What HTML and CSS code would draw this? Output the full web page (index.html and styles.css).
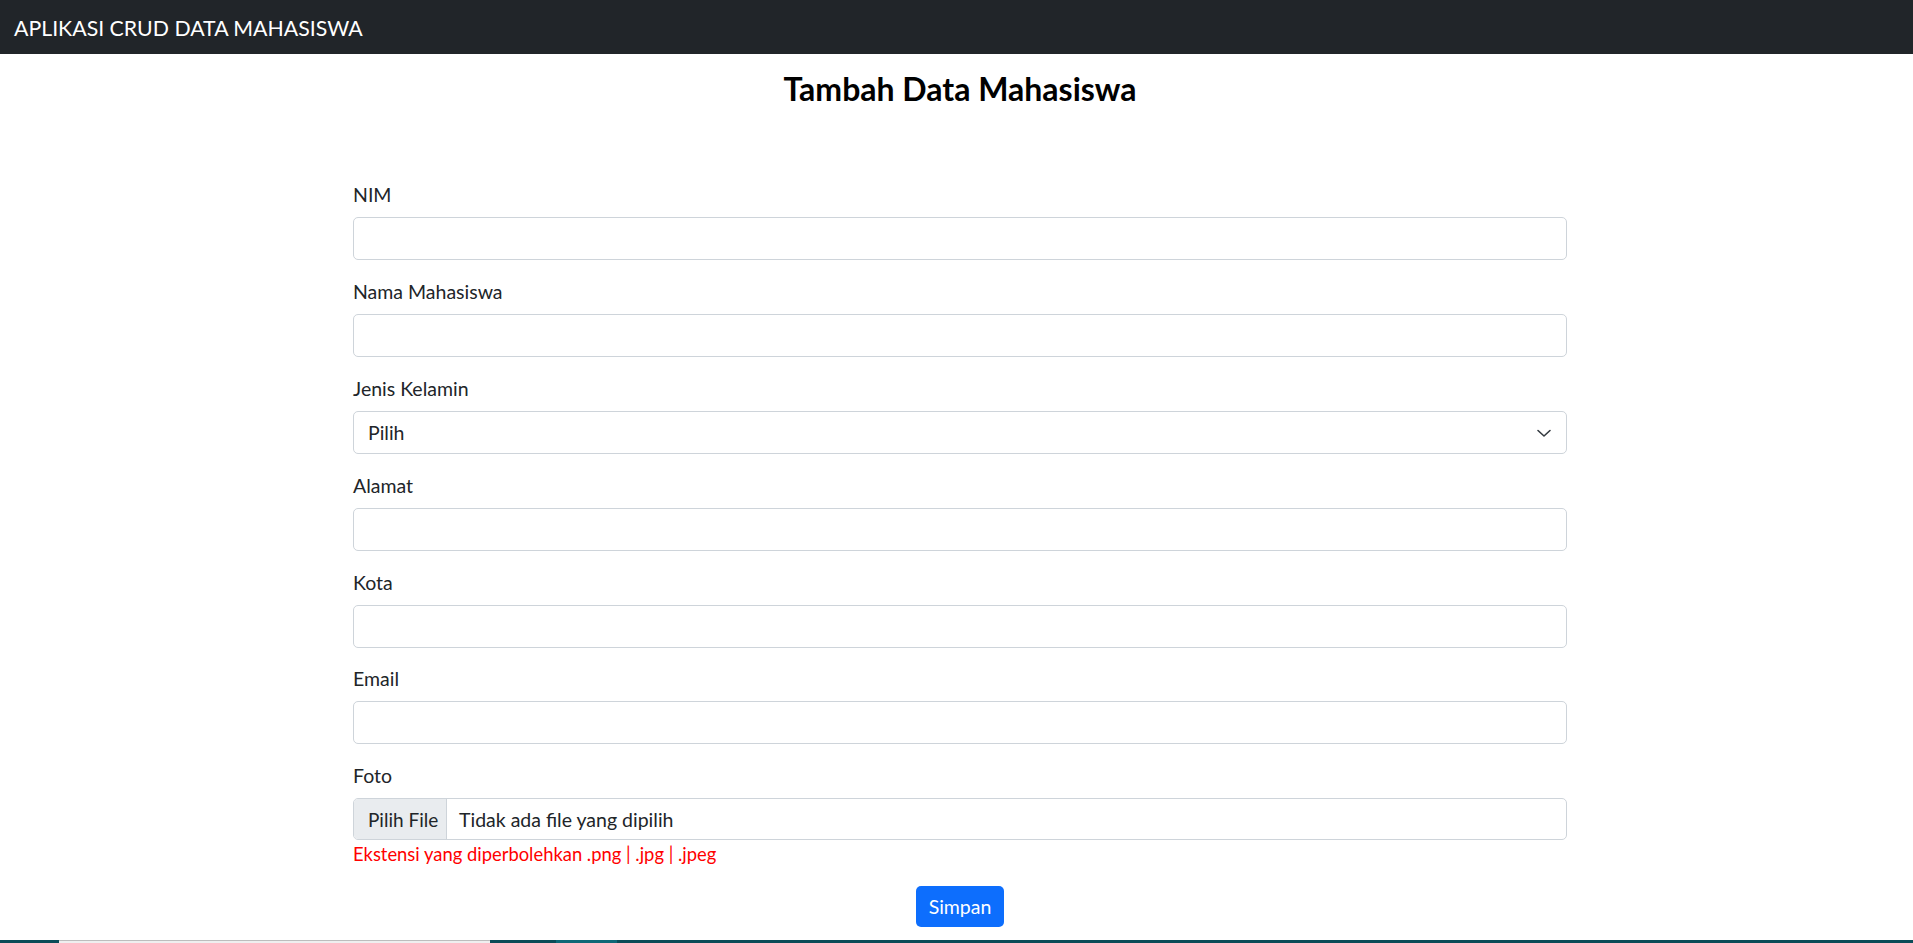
FILE: index.html
```html
<!DOCTYPE html>
<html lang="id">
<head>
<meta charset="utf-8">
<title>Tambah Data Mahasiswa</title>
<link rel="stylesheet" href="styles.css">
</head>
<body>
<nav class="navbar">
  <span class="brand">APLIKASI CRUD DATA MAHASISWA</span>
</nav>
<main class="page">
  <h1 class="title">Tambah Data Mahasiswa</h1>
  <form class="form">
    <div class="group">
      <label class="label">NIM</label>
      <div class="control"></div>
    </div>
    <div class="group">
      <label class="label">Nama Mahasiswa</label>
      <div class="control"></div>
    </div>
    <div class="group">
      <label class="label">Jenis Kelamin</label>
      <div class="control select">
        <span>Pilih</span>
        <svg class="chev" width="16" height="12" viewBox="0 0 16 12"><path d="M2 3.5l6 5.5 6-5.5" fill="none" stroke="#343a40" stroke-width="1.6" stroke-linecap="round" stroke-linejoin="round"/></svg>
      </div>
    </div>
    <div class="group">
      <label class="label">Alamat</label>
      <div class="control"></div>
    </div>
    <div class="group">
      <label class="label">Kota</label>
      <div class="control"></div>
    </div>
    <div class="group">
      <label class="label">Email</label>
      <div class="control"></div>
    </div>
    <div class="group last">
      <label class="label">Foto</label>
      <div class="control file">
        <span class="file-btn">Pilih File</span>
        <span class="file-name">Tidak ada file yang dipilih</span>
      </div>
      <div class="hint">Ekstensi yang diperbolehkan .png | .jpg | .jpeg</div>
    </div>
    <div class="actions">
      <span class="btn">Simpan</span>
    </div>
  </form>
</main>
<div class="taskbar">
  <span class="tb tb-dark w59"></span>
  <span class="tb tb-light w431"></span>
  <span class="tb tb-dark w66"></span>
  <span class="tb tb-mid w61"></span>
  <span class="tb tb-dark grow"></span>
</div>
</body>
</html>
```
FILE: styles.css
```css
* { box-sizing: border-box; }
html, body { margin: 0; padding: 0; background: #fff; }
body {
  font-family: Lato, "Open Sans", sans-serif;
  font-size: 19.5px;
  color: #212529;
  height: 943px;
  overflow: hidden;
}
.navbar {
  height: 54px;
  background: #212529;
  display: flex;
  align-items: center;
  padding-left: 14px;
}
.brand {
  color: #fff;
  font-size: 21.3px;
  line-height: 30px;
  padding-top: 1px;
}
.page {
  padding-left: 7px;
}
.title {
  margin: 16px 0 0;
  text-align: center;
  font-size: 32px;
  line-height: 38.4px;
  font-weight: 700;
  color: #000;
}
.form {
  width: 1214px;
  margin: 72px auto 0;
}
.group { margin-bottom: 16.8px; }
.group.last { margin-bottom: 0; }
.label {
  display: block;
  line-height: 29px;
  margin-bottom: 8px;
}
.control {
  height: 43px;
  border: 1px solid #ced4da;
  border-radius: 5px;
  background: #fff;
}
.select {
  display: flex;
  align-items: center;
  justify-content: space-between;
  padding: 0 14px 0 14px;
}
.select span { line-height: 29px; }
.chev { display: block; }
.file {
  height: 42px;
  display: flex;
  align-items: stretch;
  overflow: hidden;
}
.file-btn {
  background: #e9ecef;
  border-right: 1px solid #ced4da;
  width: 93px;
  display: flex;
  align-items: center;
  padding-left: 14px;
  font-size: 19px;
}
.file-name {
  display: flex;
  align-items: center;
  padding-left: 12px;
}
.hint {
  color: #ff0000;
  font-size: 18.4px;
  line-height: 24px;
  margin-top: 2px;
}
.actions {
  display: flex;
  justify-content: center;
  margin-top: 19.5px;
}
.btn {
  background: #0d6efd;
  color: #fff;
  height: 41px;
  width: 88px;
  border-radius: 5px;
  display: flex;
  align-items: center;
  justify-content: center;
}
.taskbar {
  position: fixed;
  left: 0;
  right: 0;
  bottom: 0;
  height: 3px;
  display: flex;
}
.tb { display: block; height: 3px; }
.tb-dark { background: #0a4c58; }
.tb-light { background: #efefef; border-top: 1px solid #bdbdbd; }
.tb-mid { background: #0e6877; }
.w59 { width: 59px; }
.w431 { width: 431px; }
.w66 { width: 66px; }
.w61 { width: 61px; }
.grow { flex: 1; }
```
